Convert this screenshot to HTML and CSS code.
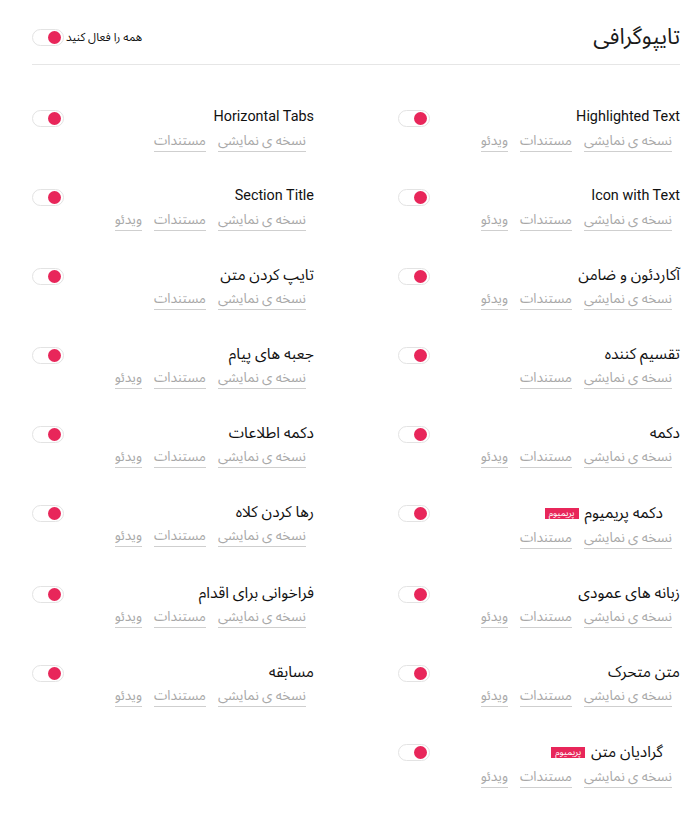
FILE: index.html
```html
<!DOCTYPE html>
<html lang="fa" dir="rtl">
<head>
<meta charset="utf-8">
<title>تایپوگرافی</title>
<link rel="stylesheet" href="styles.css">
</head>
<body>
<div class="page">
  <header class="head">
    <h1 class="head-title">تایپوگرافی</h1>
    <div class="all">
      <span class="all-label">همه را فعال کنید</span>
      <span class="toggle"><span class="dot"></span></span>
    </div>
  </header>

  <div class="grid">
    <div class="item">
      <div class="info">
        <div class="title latin">Highlighted Text</div>
        <div class="links"><a>نسخه ی نمایشی</a><a>مستندات</a><a>ویدئو</a></div>
      </div>
      <span class="toggle"><span class="dot"></span></span>
    </div>
    <div class="item">
      <div class="info">
        <div class="title latin">Horizontal Tabs</div>
        <div class="links"><a>نسخه ی نمایشی</a><a>مستندات</a></div>
      </div>
      <span class="toggle"><span class="dot"></span></span>
    </div>

    <div class="item">
      <div class="info">
        <div class="title latin">Icon with Text</div>
        <div class="links"><a>نسخه ی نمایشی</a><a>مستندات</a><a>ویدئو</a></div>
      </div>
      <span class="toggle"><span class="dot"></span></span>
    </div>
    <div class="item">
      <div class="info">
        <div class="title latin">Section Title</div>
        <div class="links"><a>نسخه ی نمایشی</a><a>مستندات</a><a>ویدئو</a></div>
      </div>
      <span class="toggle"><span class="dot"></span></span>
    </div>

    <div class="item">
      <div class="info">
        <div class="title">آکاردئون و ضامن</div>
        <div class="links"><a>نسخه ی نمایشی</a><a>مستندات</a><a>ویدئو</a></div>
      </div>
      <span class="toggle"><span class="dot"></span></span>
    </div>
    <div class="item">
      <div class="info">
        <div class="title">تایپ کردن متن</div>
        <div class="links"><a>نسخه ی نمایشی</a><a>مستندات</a></div>
      </div>
      <span class="toggle"><span class="dot"></span></span>
    </div>

    <div class="item">
      <div class="info">
        <div class="title">تقسیم کننده</div>
        <div class="links"><a>نسخه ی نمایشی</a><a>مستندات</a></div>
      </div>
      <span class="toggle"><span class="dot"></span></span>
    </div>
    <div class="item">
      <div class="info">
        <div class="title">جعبه های پیام</div>
        <div class="links"><a>نسخه ی نمایشی</a><a>مستندات</a><a>ویدئو</a></div>
      </div>
      <span class="toggle"><span class="dot"></span></span>
    </div>

    <div class="item">
      <div class="info">
        <div class="title">دکمه</div>
        <div class="links"><a>نسخه ی نمایشی</a><a>مستندات</a><a>ویدئو</a></div>
      </div>
      <span class="toggle"><span class="dot"></span></span>
    </div>
    <div class="item">
      <div class="info">
        <div class="title">دکمه اطلاعات</div>
        <div class="links"><a>نسخه ی نمایشی</a><a>مستندات</a><a>ویدئو</a></div>
      </div>
      <span class="toggle"><span class="dot"></span></span>
    </div>

    <div class="item">
      <div class="info">
        <div class="title premium">دکمه پریمیوم <span class="badge">پریمیوم</span></div>
        <div class="links"><a>نسخه ی نمایشی</a><a>مستندات</a></div>
      </div>
      <span class="toggle"><span class="dot"></span></span>
    </div>
    <div class="item">
      <div class="info">
        <div class="title">رها کردن کلاه</div>
        <div class="links"><a>نسخه ی نمایشی</a><a>مستندات</a><a>ویدئو</a></div>
      </div>
      <span class="toggle"><span class="dot"></span></span>
    </div>

    <div class="item">
      <div class="info">
        <div class="title">زبانه های عمودی</div>
        <div class="links"><a>نسخه ی نمایشی</a><a>مستندات</a><a>ویدئو</a></div>
      </div>
      <span class="toggle"><span class="dot"></span></span>
    </div>
    <div class="item">
      <div class="info">
        <div class="title">فراخوانی برای اقدام</div>
        <div class="links"><a>نسخه ی نمایشی</a><a>مستندات</a><a>ویدئو</a></div>
      </div>
      <span class="toggle"><span class="dot"></span></span>
    </div>

    <div class="item">
      <div class="info">
        <div class="title">متن متحرک</div>
        <div class="links"><a>نسخه ی نمایشی</a><a>مستندات</a><a>ویدئو</a></div>
      </div>
      <span class="toggle"><span class="dot"></span></span>
    </div>
    <div class="item">
      <div class="info">
        <div class="title">مسابقه</div>
        <div class="links"><a>نسخه ی نمایشی</a><a>مستندات</a><a>ویدئو</a></div>
      </div>
      <span class="toggle"><span class="dot"></span></span>
    </div>

    <div class="item">
      <div class="info">
        <div class="title premium">گرادیان متن <span class="badge">پریمیوم</span></div>
        <div class="links"><a>نسخه ی نمایشی</a><a>مستندات</a><a>ویدئو</a></div>
      </div>
      <span class="toggle"><span class="dot"></span></span>
    </div>
  </div>
</div>
</body>
</html>
```
FILE: styles.css
```css
* { box-sizing: border-box; }

html, body {
  margin: 0;
  padding: 0;
  background: #fff;
}

body {
  font-family: Roboto, "Noto Sans Arabic", Vazirmatn, "DejaVu Sans", sans-serif;
  color: #111;
}

.page {
  padding: 0 14px 0 32px;
}

.head {
  display: flex;
  justify-content: space-between;
  align-items: center;
  padding: 22px 0 12px;
  border-bottom: 1px solid #e6e6e6;
}

.head-title {
  margin: 0;
  font-size: 22px;
  line-height: 30px;
  font-weight: 400;
  color: #1a1a1a;
}

.all {
  display: flex;
  align-items: center;
  gap: 2px;
}

.all-label {
  font-size: 11.6px;
  color: #111;
}

.toggle {
  direction: ltr;
  flex: none;
  display: flex;
  justify-content: flex-end;
  align-items: center;
  width: 32px;
  height: 17px;
  padding: 0 2px;
  border: 1px solid #e3e3e3;
  border-radius: 9px;
  background: #fff;
}

.dot {
  width: 13px;
  height: 13px;
  border-radius: 50%;
  background: #e8265a;
}

.grid {
  display: grid;
  grid-template-columns: 282px 282px;
  column-gap: 84px;
  row-gap: 34px;
  margin-top: 42px;
}

.item {
  display: flex;
  justify-content: space-between;
  align-items: flex-start;
}

.item .toggle {
  margin-top: 3px;
}

.info {
  display: flex;
  flex-direction: column;
  align-items: flex-start;
}

.title {
  font-size: 15.5px;
  line-height: 20px;
  color: #111;
}

.title.latin {
  direction: ltr;
  align-self: flex-start;
  font-size: 14.4px;
}

.title.premium {
  padding-right: 17px;
  line-height: 22px;
}

.badge {
  display: inline-block;
  vertical-align: 2px;
  margin-right: 2px;
  padding: 0 4px;
  background: #e8265a;
  color: #fff;
  font-size: 9px;
  line-height: 11px;
}

.links {
  display: flex;
  gap: 12px;
  margin-top: 4px;
  padding-right: 8px;
}

.links a {
  font-size: 13.5px;
  line-height: 18px;
  color: #a8a8a8;
  border-bottom: 1px solid #cfcfcf;
  padding-bottom: 2px;
  text-decoration: none;
}
```
